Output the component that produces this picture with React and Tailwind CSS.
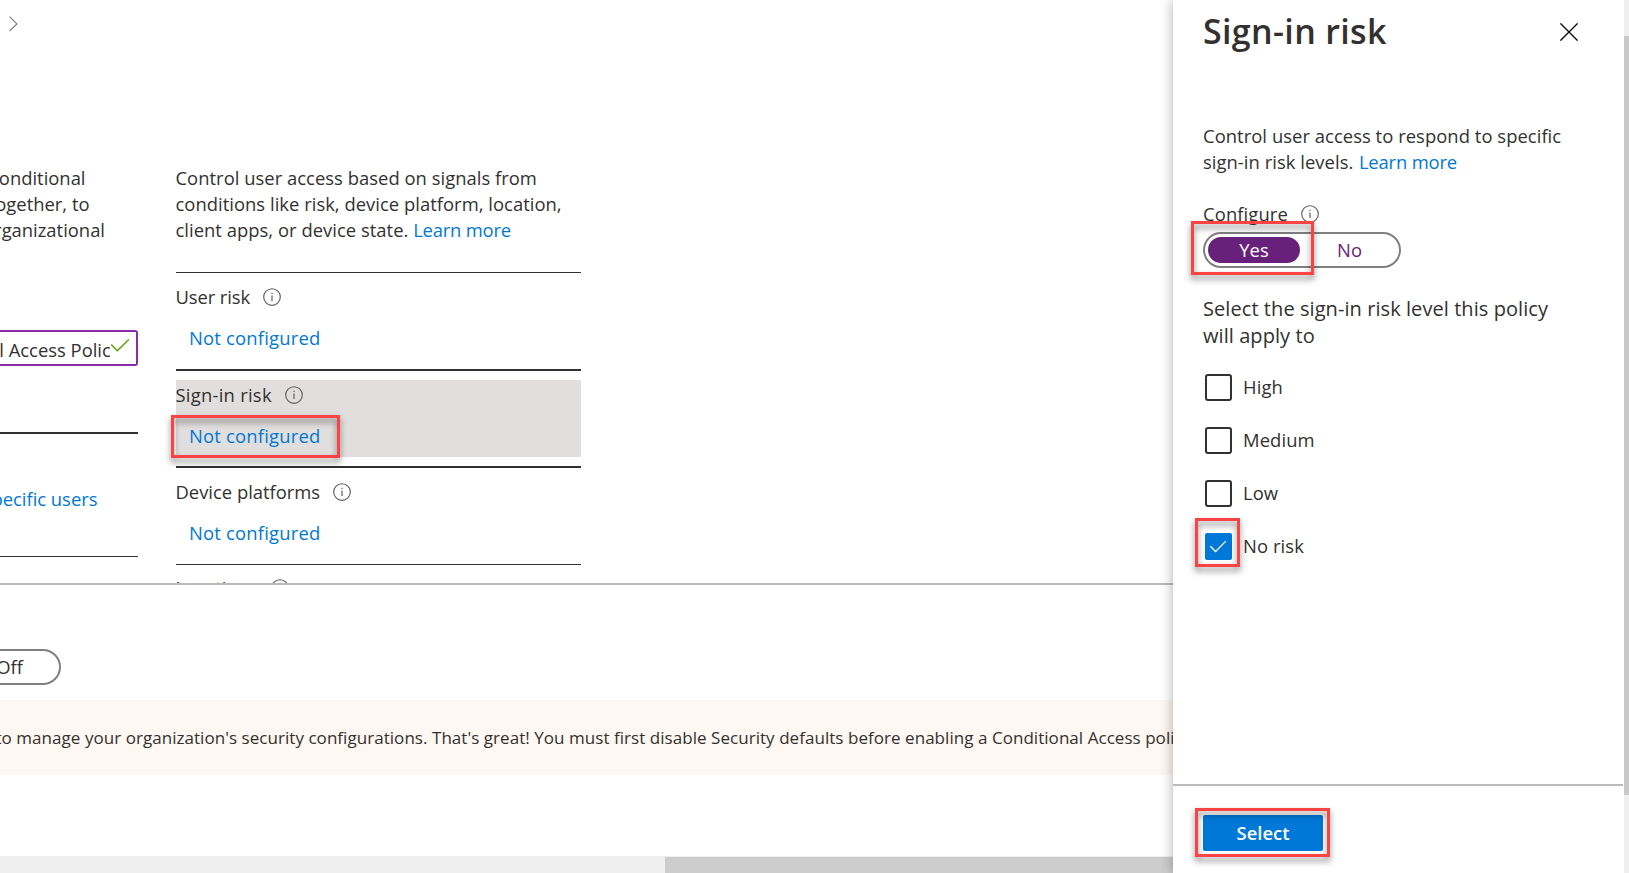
import React from "react";

function InfoIcon({ className = "" }) {
  return (
    <svg className={`h-[18px] w-[18px] shrink-0 ${className}`} viewBox="0 0 18 18" fill="none">
      <circle cx="9" cy="9" r="8.3" stroke="#5f5e5d" strokeWidth="1.15" />
      <path d="M9 7.4V13" stroke="#5f5e5d" strokeWidth="1.2" />
      <path d="M9 4.8V6.1" stroke="#5f5e5d" strokeWidth="1.2" />
    </svg>
  );
}

function Highlight({ className }) {
  return (
    <div
      className={`pointer-events-none absolute border-3 border-[#fa4343] drop-shadow-[0_4px_3px_rgba(0,0,0,0.5)] ${className}`}
    />
  );
}

function Condition({ label, labelClass = "", children }) {
  return (
    <>
      <div className="flex h-[26px] items-center">
        <span className={labelClass}>{label}</span>
        <InfoIcon className="-mt-px ml-[13px]" />
      </div>
      <div className="relative mt-[15px] h-[26px] pl-[13.5px]">
        <a className="tracking-[0.2px] text-[#0078d4]">Not configured</a>
        {children}
      </div>
    </>
  );
}

function LevelOption({ label, checked, children }) {
  return (
    <div className="relative flex h-[27px] items-center gap-[11px] pl-0.5">
      {checked ? (
        <div className="flex h-[27px] w-[27px] items-center justify-center rounded-[2px] bg-[#0078d7]">
          <svg className="h-[27px] w-[27px]" viewBox="0 0 27 27" fill="none">
            <path d="M5.3 13.2L10.6 18.5L20.8 8.1" stroke="#fff" strokeWidth="1.3" />
          </svg>
        </div>
      ) : (
        <div className="h-[27px] w-[27px] rounded-[3px] border-2 border-[#323130]" />
      )}
      <span className="mb-0.5 tracking-[0.1px]">{label}</span>
      {children}
    </div>
  );
}

function PolicyBlade() {
  return (
    <main className="flex w-[1173px] shrink-0 flex-col overflow-hidden">
      <div className="h-[583px] shrink-0 overflow-hidden">
        <div className="h-[165px] pt-4 pl-[9px]">
          <svg className="h-4 w-[9px]" viewBox="0 0 9 16" fill="none">
            <path d="M0.5 0.6L7.9 7.9L0.5 15.2" stroke="#767676" strokeWidth="1.1" />
          </svg>
        </div>
        <div className="flex gap-[37px]">
          <section className="w-[138px] shrink-0 overflow-hidden">
            <div className="flex flex-col whitespace-nowrap">
              <div className="flex w-[85.5px] justify-end">conditional</div>
              <div className="flex w-[89.5px] justify-end">together, to</div>
              <div className="flex w-[105px] justify-end">organizational</div>
            </div>
            <div className="mt-[87px] flex h-9 items-center rounded-r-[3px] border-2 border-l-0 border-[#8a2da5]">
              <div className="mt-[3px] flex w-[110px] justify-end overflow-hidden whitespace-nowrap">
                <span className="-mr-[10px]">l Access Policy</span>
              </div>
              <svg className="-mt-1.5 h-[15px] w-[20px] shrink-0" viewBox="0 0 20 15" fill="none">
                <path d="M1.2 6.6L7.3 12.8L18.8 1.6" stroke="#57a300" strokeWidth="1.4" />
              </svg>
            </div>
            <div className="mt-[66px] h-0.5 bg-[#323130]" />
            <div className="mt-[52px] flex w-[97.5px] justify-end whitespace-nowrap text-[#0078d4]">specific users</div>
            <div className="mt-11 h-px bg-[#323130]" />
          </section>

          <section className="w-[406px] shrink-0">
            <p className="pl-[0.5px] whitespace-nowrap tracking-[0.03px]">
              Control user access based on signals from
              <br />
              conditions like risk, device platform, location,
              <br />
              client apps, or device state. <a className="-tracking-[0.2px] text-[#0078d4]">Learn more</a>
            </p>
            <div className="mt-[29px] ml-px h-px bg-[#323130]" />
            <div className="mt-[11px] pl-[0.5px]">
              <Condition label="User risk" labelClass="-tracking-[0.1px]" />
            </div>
            <div className="mt-[18px] ml-px h-0.5 bg-[#323130]" />
            <div className="relative mt-[9px] h-[77px] pt-0.5">
              <div className="absolute inset-y-0 right-0 left-px bg-[#e1dfdd]" />
              <div className="relative pl-[0.5px]">
                <Condition label="Sign-in risk" labelClass="tracking-[0.26px]">
                  <Highlight className="-top-2 -left-[4.5px] h-[43px] w-[169px]" />
                </Condition>
              </div>
            </div>
            <div className="mt-[9px] ml-px h-0.5 bg-[#323130]" />
            <div className="mt-[11px] pl-[0.5px]">
              <Condition label="Device platforms" />
            </div>
            <div className="mt-[18px] ml-px h-px bg-[#323130]" />
            <div className="mt-[10px] pl-[0.5px]">
              <Condition label="Locations" />
            </div>
          </section>
        </div>
      </div>

      <div className="h-0.5 shrink-0 bg-[#bababa]" />

      <div className="flex flex-1 flex-col">
        <div className="mt-16 flex h-9 w-[61px] items-center justify-end overflow-hidden rounded-r-full border-2 border-l-0 border-[#808080] pr-9">
          Off
        </div>
        <div className="mt-[15px] flex h-[75px] items-center overflow-hidden bg-[#fff7f1]">
          <span className="-ml-[4.5px] whitespace-nowrap text-[17px] tracking-[0.045px]">
            to manage your organization's security configurations. That's great! You must first disable Security
            defaults before enabling a Conditional Access poli
          </span>
        </div>
        <div className="mt-auto flex h-[17px] items-end justify-end bg-[#efefef]">
          <div className="h-4 w-[508px] bg-[#cdcdcd]" />
        </div>
      </div>
    </main>
  );
}

function SignInRiskPanel() {
  return (
    <aside className="relative flex w-[451px] shrink-0 flex-col bg-white pl-[30px] shadow-[0_0_12px_rgba(0,0,0,0.32)]">
      <header className="flex h-[54px] shrink-0 items-start justify-between pr-[46px]">
        <h1 className="mt-2 text-[34px] leading-[46px] font-semibold tracking-[0.35px]">Sign-in risk</h1>
        <svg className="mt-[23px] h-[18px] w-[18px]" viewBox="0 0 18 18" fill="none">
          <path d="M0.4 0.4L17.6 17.6M17.6 0.4L0.4 17.6" stroke="#111" strokeWidth="1.4" />
        </svg>
      </header>

      <p className="mt-[69px] whitespace-nowrap tracking-[0.05px]">
        Control user access to respond to specific
        <br />
        sign-in risk levels.{" "}
        <a className="ml-[0.7px] -tracking-[0.15px] text-[#0078d4]">Learn more</a>
      </p>

      <div className="mt-[26px] flex h-[26px] items-center">
        <span className="tracking-[0.12px]">Configure</span>
        <InfoIcon className="-mt-px ml-[13px]" />
      </div>

      <div className="relative mt-[5px] flex h-9 w-[198px] rounded-full border-2 border-[#808080] p-[3px]">
        <div className="w-[92px] rounded-full bg-[#68217a] text-center text-white">Yes</div>
        <div className="flex-1 pl-[3px] text-center text-[#68217a]">No</div>
        <Highlight className="-top-[13px] -left-[14px] h-[54px] w-[123px]" />
      </div>

      <p className="mt-[27px] text-[20px] leading-[27px] whitespace-nowrap tracking-[0.07px]">
        Select the sign-in risk level this policy
        <br />
        will apply to
      </p>

      <div className="mt-[25px] flex flex-col gap-[26px]">
        <LevelOption label="High" />
        <LevelOption label="Medium" />
        <LevelOption label="Low" />
        <LevelOption label="No risk" checked>
          <Highlight className="-top-[15px] -left-2 h-[49px] w-[45px]" />
        </LevelOption>
      </div>

      <footer className="mt-auto mr-px -ml-[30px] h-[89px] shrink-0 border-t-2 border-[#bababa] pt-[29px] pl-[30px]">
        <div className="relative w-[120px]">
          <button className="flex h-9 w-[120px] items-center justify-center rounded-[2px] bg-[#0078d7] font-semibold text-white">
            Select
          </button>
          <Highlight className="-top-[7px] -left-2 h-[49px] w-[135px]" />
        </div>
      </footer>
    </aside>
  );
}

export default function App() {
  return (
    <div className="flex h-[873px] w-[1629px] overflow-hidden bg-white font-['Open_Sans','Noto_Sans',sans-serif] text-[18.4px] leading-[26px] text-[#323130]">
      <PolicyBlade />
      <SignInRiskPanel />
      <div className="relative w-[5px] bg-[#efefef] pt-9">
        <div className="h-[759px] bg-[#c8c8c8]" />
      </div>
    </div>
  );
}
